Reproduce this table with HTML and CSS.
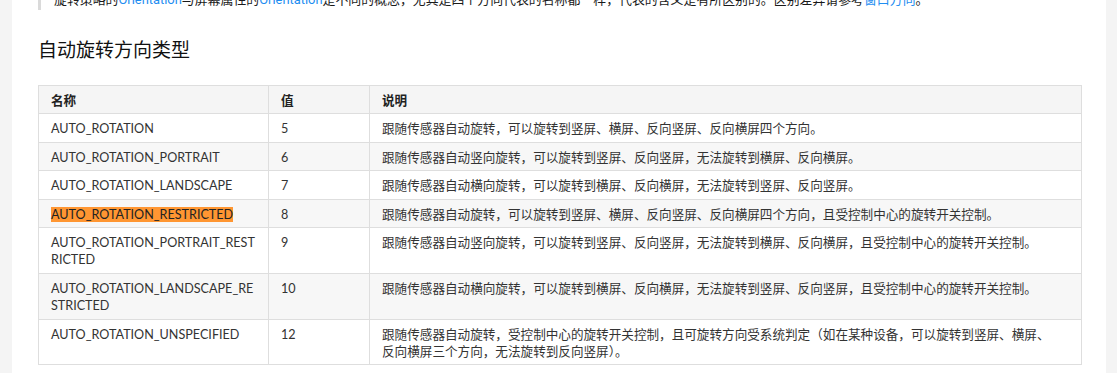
FILE: index.html
```html
<!DOCTYPE html>
<html lang="zh-CN">
<head>
<meta charset="utf-8">
<title>自动旋转方向类型</title>
<link rel="stylesheet" href="styles.css">
</head>
<body>
<div class="page">
  <div class="gutter gutter-left"></div>
  <main class="doc">
    <blockquote class="note">旋转策略的<a href="#">Orientation</a>与屏幕属性的<a href="#">Orientation</a>是不同的概念，尤其是四个方向代表的名称都一样，代表的含义是有所区别的。区别差异请参考<a href="#">窗口方向</a>。</blockquote>
    <h2 class="title">自动旋转方向类型</h2>
    <table class="tbl">
      <colgroup><col class="c1"><col class="c2"><col class="c3"></colgroup>
      <thead>
        <tr><th>名称</th><th>值</th><th>说明</th></tr>
      </thead>
      <tbody>
        <tr><td>AUTO_ROTATION</td><td>5</td><td>跟随传感器自动旋转，可以旋转到竖屏、横屏、反向竖屏、反向横屏四个方向。</td></tr>
        <tr><td>AUTO_ROTATION_PORTRAIT</td><td>6</td><td>跟随传感器自动竖向旋转，可以旋转到竖屏、反向竖屏，无法旋转到横屏、反向横屏。</td></tr>
        <tr><td>AUTO_ROTATION_LANDSCAPE</td><td>7</td><td>跟随传感器自动横向旋转，可以旋转到横屏、反向横屏，无法旋转到竖屏、反向竖屏。</td></tr>
        <tr><td><mark class="hit">AUTO_ROTATION_RESTRICTED</mark></td><td>8</td><td>跟随传感器自动旋转，可以旋转到竖屏、横屏、反向竖屏、反向横屏四个方向，且受控制中心的旋转开关控制。</td></tr>
        <tr><td>AUTO_ROTATION_PORTRAIT_RESTRICTED</td><td>9</td><td>跟随传感器自动竖向旋转，可以旋转到竖屏、反向竖屏，无法旋转到横屏、反向横屏，且受控制中心的旋转开关控制。</td></tr>
        <tr><td>AUTO_ROTATION_LANDSCAPE_RESTRICTED</td><td>10</td><td>跟随传感器自动横向旋转，可以旋转到横屏、反向横屏，无法旋转到竖屏、反向竖屏，且受控制中心的旋转开关控制。</td></tr>
        <tr><td>AUTO_ROTATION_UNSPECIFIED</td><td>12</td><td>跟随传感器自动旋转，受控制中心的旋转开关控制，且可旋转方向受系统判定（如在某种设备，可以旋转到竖屏、横屏、反向横屏三个方向，无法旋转到反向竖屏）。</td></tr>
      </tbody>
    </table>
  </main>
  <div class="gutter gutter-right"></div>
</div>
</body>
</html>
```
FILE: styles.css
```css
html, body {
  margin: 0;
  padding: 0;
  background: #fff;
  overflow: hidden;
}
body {
  font-family: Lato, "Noto Sans CJK SC", sans-serif;
  color: #333;
  font-size: 12.6px;
  line-height: 18px;
}
.page {
  display: flex;
  height: 373px;
}
.gutter {
  background: #f4f4f4;
  flex: none;
}
.gutter-left { width: 12px; }
.gutter-right { width: 11px; }
.doc {
  flex: 1;
  padding: 0 25px 0 26px;
  min-width: 0;
}
.note {
  margin: -9px 0 0 0;
  padding: 0 0 1px 13px;
  border-left: 3px solid #dadada;
  color: #1a1a1a;
  white-space: nowrap;
  font-family: Roboto, "Noto Sans CJK SC", sans-serif;
  font-size: 12.9px;
}
.note a {
  color: #1f8ef1;
  text-decoration: none;
}
.title {
  margin: 26px 0 21px 0;
  font-size: 19px;
  line-height: 28px;
  font-weight: 400;
  color: #111;
}
.tbl {
  width: 1043px;
  border-collapse: collapse;
  table-layout: fixed;
}
.c1 { width: 230px; }
.c2 { width: 101px; }
.c3 { width: 712px; }
.tbl th, .tbl td {
  border: 1px solid #dedede;
  padding: 6px 12px 4px;
  line-height: 17.4px;
  text-align: left;
  vertical-align: top;
  word-break: break-all;
  color: #333;
}
.tbl td:last-child {
  padding-right: 22px;
}
.tbl th {
  font-weight: 700;
  background: #f5f5f5;
  color: #222;
}
.tbl tbody tr:nth-child(even) td {
  background: #f7f7f7;
}
.hit {
  background: #ff9632;
  color: #222;
}
```
